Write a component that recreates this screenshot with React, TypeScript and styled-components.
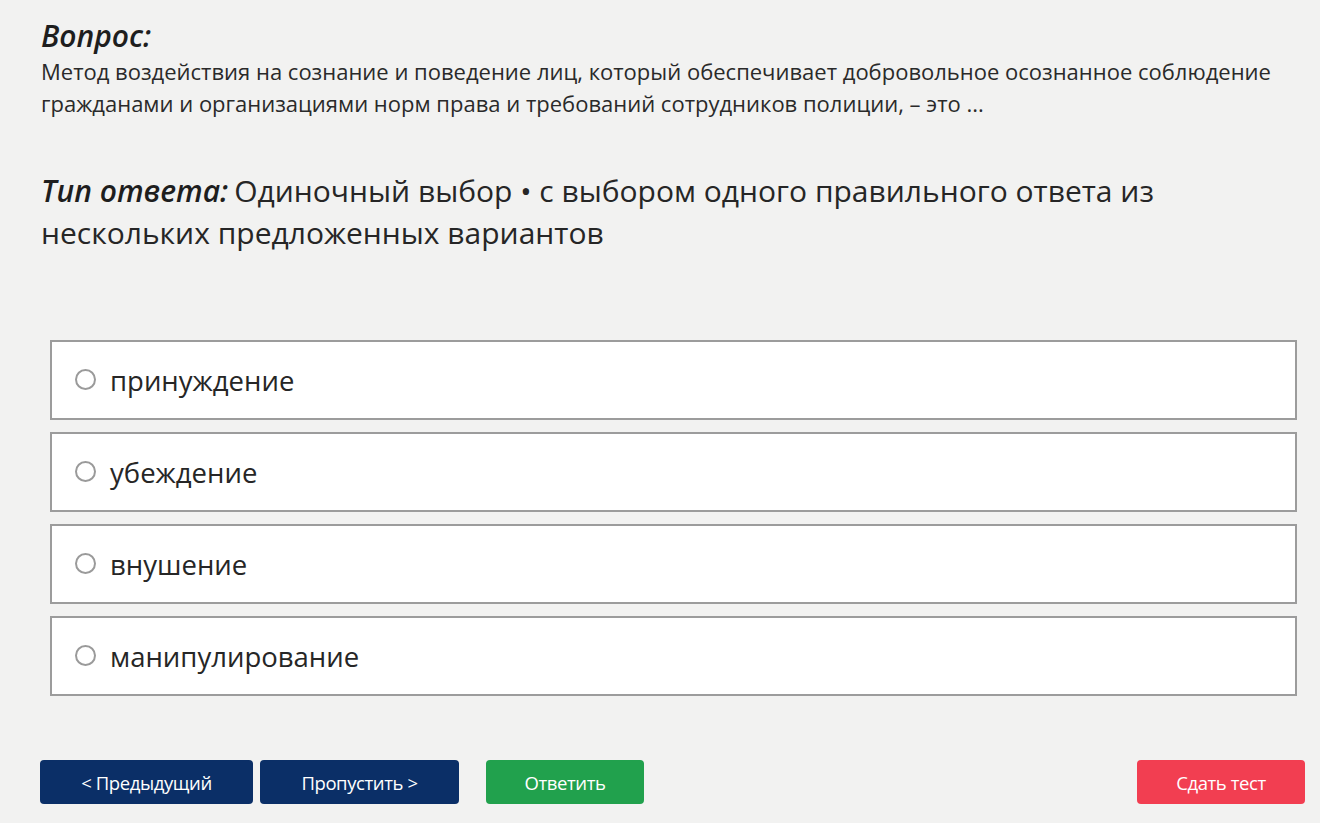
import React, { useState } from 'react'
import styled, { createGlobalStyle } from 'styled-components'

const GlobalStyle = createGlobalStyle`
  html, body {
    margin: 0;
    padding: 0;
    background: #f2f2f1;
  }
  body {
    font-family: 'Open Sans', 'Noto Sans', sans-serif;
    color: #222;
  }
`

const Page = styled.div`
  width: 1320px;
  height: 823px;
  box-sizing: border-box;
  padding: 17px 15px 0 41px;
  display: flex;
  flex-direction: column;
`

const QuestionLabel = styled.div`
  font-size: 30px;
  line-height: 38px;
  font-weight: 600;
  font-style: italic;
  color: #1e1e1e;
`

const QuestionText = styled.div`
  font-size: 22px;
  line-height: 32px;
  color: #2a2a2a;
  width: 1250px;
`

const AnswerType = styled.div`
  margin-top: 51px;
  font-size: 30px;
  line-height: 42px;
  color: #262626;
  width: 1160px;
`

const TypeLabel = styled.span`
  font-weight: 600;
  font-style: italic;
  color: #1e1e1e;
  margin-right: 6px;
`

const TypeValue = styled.span`
  font-weight: 400;
`

const Options = styled.div`
  margin-top: 86px;
  margin-left: 9px;
  width: 1247px;
  display: flex;
  flex-direction: column;
  gap: 12px;
`

const Option = styled.label`
  height: 80px;
  box-sizing: border-box;
  background: #fff;
  border: 2px solid #9c9c9c;
  display: flex;
  align-items: center;
  padding-left: 23px;
  gap: 14px;
  cursor: pointer;
  font-size: 27.5px;
  color: #262626;
`

const Radio = styled.span<{ $checked: boolean }>`
  width: 21px;
  height: 21px;
  box-sizing: border-box;
  border-radius: 50%;
  border: 2px solid #9a9a9a;
  background: ${p => (p.$checked ? 'radial-gradient(circle, #555 0 4px, #fff 5px)' : '#fff')};
  flex: none;
  margin-top: -2px;
`

const Footer = styled.div`
  margin-top: 64px;
  margin-left: -1px;
  width: 1265px;
  display: flex;
  align-items: center;
  gap: 7px;
`

const Button = styled.button<{ $tone: 'navy' | 'green' | 'red'; $w: number }>`
  width: ${p => p.$w}px;
  height: 44px;
  border: none;
  border-radius: 4px;
  font-family: 'Open Sans', 'Noto Sans', sans-serif;
  font-size: 18.5px;
  letter-spacing: -0.4px;
  color: #fff;
  cursor: pointer;
  background: ${p => (p.$tone === 'navy' ? '#0b2f67' : p.$tone === 'green' ? '#21a14d' : '#f23e51')};
`

const Spacer = styled.div`
  flex: 1;
`

const options = ['принуждение', 'убеждение', 'внушение', 'манипулирование']

export default function App() {
  const [selected, setSelected] = useState<number | null>(null)

  return (
    <Page>
      <GlobalStyle />
      <QuestionLabel>Вопрос:</QuestionLabel>
      <QuestionText>
        Метод воздействия на сознание и поведение лиц, который обеспечивает добровольное осознанное
        соблюдение гражданами и организациями норм права и требований сотрудников полиции, – это ...
      </QuestionText>
      <AnswerType>
        <TypeLabel>Тип ответа:</TypeLabel>
        <TypeValue>
          Одиночный выбор • с выбором одного правильного ответа из нескольких предложенных вариантов
        </TypeValue>
      </AnswerType>
      <Options>
        {options.map((o, i) => (
          <Option key={o} onClick={() => setSelected(i)}>
            <Radio $checked={selected === i} />
            {o}
          </Option>
        ))}
      </Options>
      <Footer>
        <Button $tone='navy' $w={213}>&lt; Предыдущий</Button>
        <Button $tone='navy' $w={199}>Пропустить &gt;</Button>
        <Button $tone='green' $w={158} style={{ marginLeft: 20 }}>Ответить</Button>
        <Spacer />
        <Button $tone='red' $w={168}>Сдать тест</Button>
      </Footer>
    </Page>
  )
}
